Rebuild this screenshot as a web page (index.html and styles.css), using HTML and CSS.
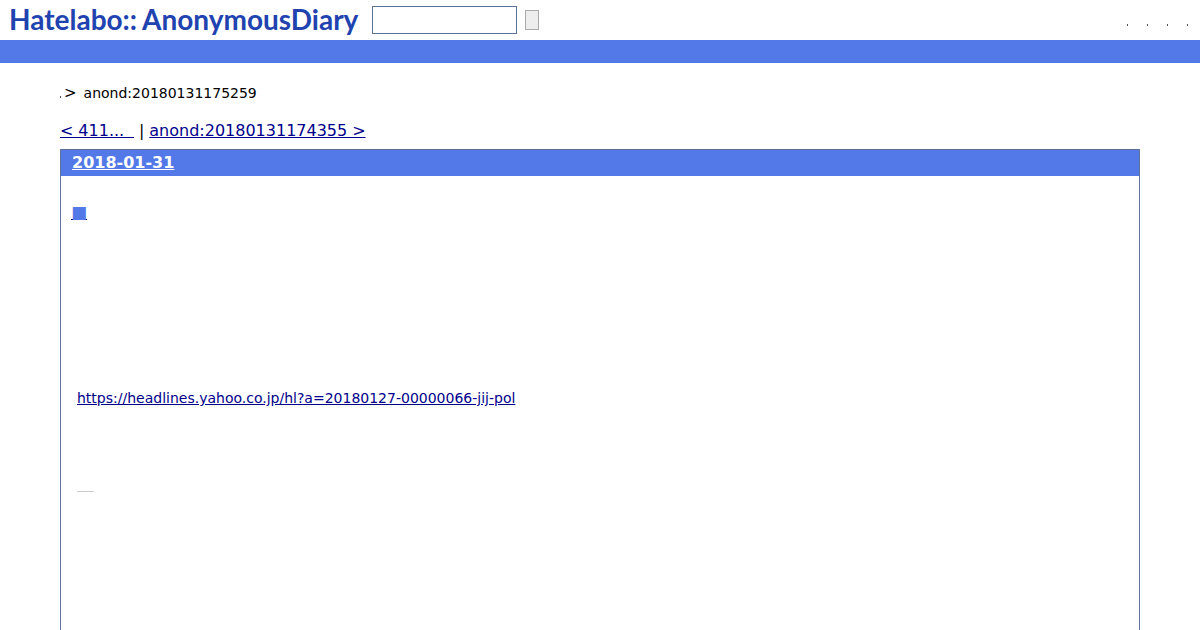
FILE: index.html
```html
<!doctype html>
<html lang="ja">
  <head>
    <meta charset="UTF-8" />
    <title>anond:20180131175259</title>
    <link rel="stylesheet" href="styles.css">
  </head>
  <body>
    <div class="header">
      <a class="logo" href="#">Hatelabo::<span class="logo-name">AnonymousDiary</span></a>
      <form class="search">
        <input class="search-text" type="text" />
        <button class="search-button" type="button"></button>
      </form>
      <ul class="menu">
        <li></li>
        <li></li>
        <li></li>
        <li></li>
      </ul>
    </div>
    <div class="bar"></div>

    <div class="main">
      <div class="crumbs">
        <span class="crumb-dot"></span>
        <span class="crumb-sep">&gt;</span>
        <span>anond:20180131175259</span>
      </div>

      <div class="pager">
        <a href="#">&lt; 411...&nbsp;&nbsp;</a> | <a href="#">anond:20180131174355 &gt;</a>
      </div>

      <div class="day">
        <h2 class="day-title"><a href="#">2018-01-31</a></h2>
        <div class="day-body">
          <h3 class="entry-title"><a href="#">■</a></h3>
          <p class="entry-link"><a href="#">https://headlines.yahoo.co.jp/hl?a=20180127-00000066-jij-pol</a></p>
          <div class="entry-rule"></div>
        </div>
      </div>
    </div>
  </body>
</html>
```

FILE: styles.css
```css
html, body {
  height: 630px;
  overflow: hidden;
}
body {
  margin: 0;
  font-family: "DejaVu Sans", sans-serif;
  background-color: #fff;
  color: #000;
}
a {
  color: #00008b;
}
.header {
  display: flex;
  align-items: center;
  height: 40px;
}
.logo {
  width: 363px;
  margin-left: 9px;
  font-family: Lato, sans-serif;
  font-size: 28px;
  font-weight: 700;
  line-height: 38px;
  height: 40px;
  color: #2143b0;
  text-decoration: none;
  white-space: nowrap;
}
.logo-name {
  margin-left: 5px;
}
.search {
  display: flex;
  align-items: center;
  gap: 8px;
}
.search-text {
  box-sizing: border-box;
  width: 145px;
  height: 28px;
  margin: 0;
  padding: 0;
  border: 1px solid #5a7199;
  background: #fff;
}
.search-button {
  box-sizing: border-box;
  width: 14px;
  height: 20px;
  padding: 0;
  border: 1px solid #aaa;
  border-radius: 0;
  background: #eee;
}
.menu {
  display: flex;
  gap: 19px;
  margin: 9px 12px 0 auto;
  padding: 0;
  list-style: none;
}
.menu li {
  width: 1px;
  height: 2px;
  background: #555;
}
.bar {
  height: 23px;
  background-color: #5279e7;
}
.main {
  margin: 0 60px;
}
.crumbs {
  display: flex;
  align-items: center;
  height: 20px;
  margin-top: 20px;
  font-size: 14px;
}
.crumb-dot {
  width: 1px;
  height: 2px;
  margin-top: 8px;
  background: #555;
}
.crumb-sep {
  margin: 0 7px 0 3px;
  font-size: 15px;
}
.pager {
  margin-top: 18px;
  font-size: 16px;
  line-height: 20px;
  word-spacing: -0.15px;
}
.day {
  margin-top: 8px;
  height: 481px;
  border: 1px solid #5f7199;
  border-bottom: 0;
}
.day-title {
  margin: 0;
  padding: 0 11px;
  height: 26px;
  background-color: #5279e7;
  font-size: 16px;
  line-height: 26px;
}
.day-title a {
  color: #fff;
}
.day-body {
  padding: 0 16px;
}
.entry-title {
  margin: 26px 0 0 -6px;
  font-size: 17px;
  line-height: 20px;
  font-weight: 400;
}
.entry-title a {
  color: #5279e7;
  text-decoration-color: #00008b;
}
.entry-link {
  margin: 166px 0 0;
  font-size: 14px;
  line-height: 20px;
}
.entry-rule {
  width: 17px;
  height: 1px;
  margin-top: 83px;
  background: #ccc;
}
```
